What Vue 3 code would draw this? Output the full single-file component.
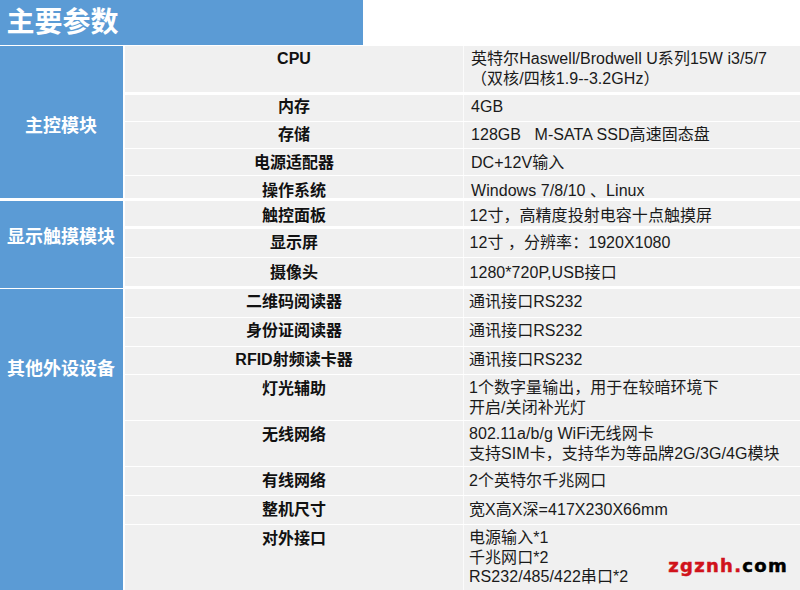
<script setup>
const sections = [
  {
    label: '主控模块', h: 152, gap: 3, labelTop: 68, rows: [
      { k: 'CPU', v: '英特尔Haswell/Brodwell U系列15W i3/5/7\n（双核/四核1.9--3.2GHz）', h: 46, gap: 3, top: 3, x: 7 },
      { k: '内存', v: '4GB', h: 26, gap: 1, top: 2, x: 7 },
      { k: '存储', v: '128GB   M-SATA SSD高速固态盘', h: 26, gap: 1, top: 3, x: 7 },
      { k: '电源适配器', v: 'DC+12V输入', h: 26, gap: 1, top: 4, x: 7 },
      { k: '操作系统', v: 'Windows 7/8/10 、Linux', h: 25, gap: 0, top: 5, x: 7 }
    ]
  },
  {
    label: '显示触摸模块', h: 87, gap: 1, labelTop: 24, rows: [
      { k: '触控面板', v: '12寸，高精度投射电容十点触摸屏', h: 25, gap: 3, top: 5, x: 5.5 },
      { k: '显示屏', v: '12寸 ，分辨率：1920X1080', h: 28, gap: 1, top: 4, x: 5.5 },
      { k: '摄像头', v: '1280*720P,USB接口', h: 28, gap: 2, top: 5, x: 5.5 }
    ]
  },
  {
    label: '其他外设设备', h: 301, gap: 0, labelTop: 68, rows: [
      { k: '二维码阅读器', v: '通讯接口RS232', h: 28, gap: 1, top: 3, x: 5 },
      { k: '身份证阅读器', v: '通讯接口RS232', h: 28, gap: 1, top: 3, x: 5 },
      { k: 'RFID射频读卡器', v: '通讯接口RS232', h: 27, gap: 1, top: 3, x: 5 },
      { k: '灯光辅助', v: '1个数字量输出，用于在较暗环境下\n开启/关闭补光灯', h: 45, gap: 1, top: 3, x: 5, keyTop: 1 },
      { k: '无线网络', v: '802.11a/b/g WiFi无线网卡\n支持SIM卡，支持华为等品牌2G/3G/4G模块', h: 45, gap: 1, top: 3, x: 5, keyTop: 1 },
      { k: '有线网络', v: '2个英特尔千兆网口', h: 28, gap: 1, top: 4, x: 5 },
      { k: '整机尺寸', v: '宽X高X深=417X230X66mm', h: 28, gap: 1, top: 4, x: 5 },
      { k: '对外接口', v: '电源输入*1\n千兆网口*2\nRS232/485/422串口*2', h: 65, gap: 0, top: 3, x: 5, keyTop: 1, lh: 19.5 }
    ]
  }
]
</script>

<template>
  <div class="page">
    <div class="title">主要参数</div>
    <div v-for="s in sections" :key="s.label" class="section" :style="{ height: s.h + 'px', marginBottom: s.gap + 'px' }">
      <div class="label" :style="{ paddingTop: s.labelTop + 'px' }">{{ s.label }}</div>
      <div class="rows">
        <div v-for="r in s.rows" :key="r.k" class="row" :style="{ height: r.h + 'px', marginBottom: r.gap + 'px', paddingTop: r.top + 'px' }">
          <div class="key" :style="{ paddingTop: (r.keyTop || 0) + 'px' }">{{ r.k }}</div>
          <div class="value" :style="{ paddingLeft: r.x + 'px', lineHeight: (r.lh || 20) + 'px' }">{{ r.v }}</div>
        </div>
      </div>
    </div>
    <div class="mark"><span class="red">zgznh.</span>com</div>
  </div>
</template>

<style>
html, body { margin: 0; background: #fff; }
</style>

<style scoped>
.page {
  position: relative;
  width: 800px;
  height: 590px;
  overflow: hidden;
  background: #fff;
  font-family: "Liberation Sans", "Noto Sans CJK SC", sans-serif;
  color: #1a1a1a;
}
.title {
  width: 363px;
  height: 45px;
  margin-bottom: 1px;
  box-sizing: border-box;
  padding-left: 6.5px;
  background: #5b9bd5;
  color: #fff;
  font-size: 28px;
  font-weight: 700;
  line-height: 45px;
}
.section {
  display: flex;
  overflow: hidden;
}
.label {
  flex: none;
  width: 123px;
  margin-right: 2px;
  box-sizing: border-box;
  padding-right: 1px;
  background: #5b9bd5;
  color: #fff;
  font-size: 18px;
  font-weight: 700;
  line-height: 24px;
  text-align: center;
}
.rows {
  flex: 1;
  display: flex;
  flex-direction: column;
}
.row {
  flex: none;
  display: flex;
  box-sizing: border-box;
  background: linear-gradient(to right, #f0f0f0 338px, #fbfbfb 338px, #fbfbfb 339px, #f0f0f0 339px);
  font-size: 16px;
  line-height: 20px;
}
.key {
  flex: none;
  width: 338px;
  box-sizing: border-box;
  font-weight: 700;
  text-align: center;
  color: #111;
}
.value {
  flex: 1;
  margin-left: 1px;
  white-space: pre;
  letter-spacing: 0.05px;
}
.mark {
  position: absolute;
  right: 12px;
  bottom: 14px;
  font-family: "DejaVu Sans", sans-serif;
  font-size: 18px;
  font-weight: 700;
  line-height: 20px;
  letter-spacing: 1.3px;
  color: #000;
  -webkit-text-stroke: 0.5px currentColor;
}
.red { color: #d0121b; }
</style>
